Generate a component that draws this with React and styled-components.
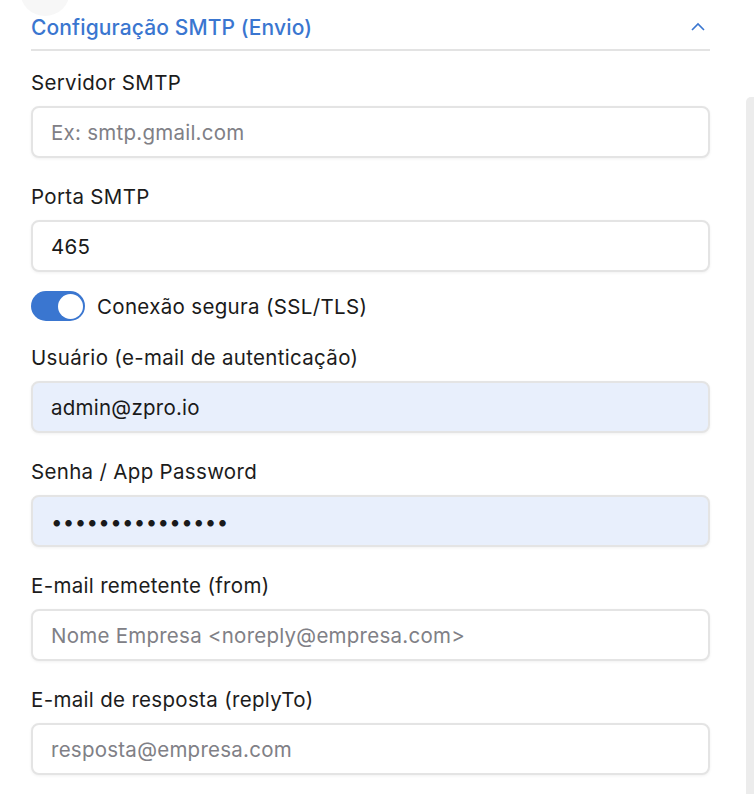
import React from "react";
import styled, { createGlobalStyle } from "styled-components";

const Global = createGlobalStyle`
  html, body { margin: 0; padding: 0; background: #ffffff; }
  body { font-family: Inter, "Noto Sans", sans-serif; color: #1a1a1a; overflow: hidden; }
`;

const Page = styled.div`
  position: relative;
  width: 754px;
  height: 794px;
  overflow: hidden;
  background: #fff;
`;

const Ghost = styled.div`
  position: absolute;
  left: 20px;
  top: -34px;
  width: 50px;
  height: 50px;
  border-radius: 50%;
  background: #f7f7f7;
`;

const Scrollbar = styled.div`
  position: absolute;
  right: 0;
  top: 97px;
  bottom: 0;
  width: 8px;
  background: #ececec;
  border-radius: 5px 0 0 0;
`;

const Section = styled.div`
  width: 679px;
  margin-left: 31px;
  display: flex;
  flex-direction: column;
`;

const Header = styled.div`
  display: flex;
  align-items: center;
  justify-content: space-between;
  padding-top: 5px;
  border-bottom: 2px solid #e3e3e3;
  box-sizing: border-box;
  height: 51px;
`;

const Title = styled.div`
  color: #3a76d0;
  font-size: 21px;
  font-weight: 500;
  letter-spacing: 0.12px;
`;

const Chevron = styled.svg`
  margin-right: 4px;
`;

const Field = styled.div`
  display: flex;
  flex-direction: column;
  margin-top: ${(p) => p.$top || 20}px;
`;

const Label = styled.label`
  font-size: 20.5px;
  font-weight: 400;
  color: #1c1c1c;
  line-height: 25px;
  height: 25px;
  margin-bottom: 11px;
  letter-spacing: 0.32px;
  white-space: nowrap;
`;

const Input = styled.div`
  height: 52px;
  box-sizing: border-box;
  border: 2px solid #e4e4e4;
  border-radius: 8px;
  background: ${(p) => (p.$filled ? "#e8effc" : "#ffffff")};
  box-shadow: 0 1px 3px rgba(0, 0, 0, 0.06);
  display: flex;
  align-items: center;
  padding: 0 18px;
  font-size: 20.5px;
  color: ${(p) => (p.$placeholder ? "#808086" : "#1a1a1a")};
  letter-spacing: ${(p) => (p.$dots ? "0.3px" : "0.25px")};
  white-space: nowrap;
`;

const ToggleRow = styled.div`
  display: flex;
  align-items: center;
  gap: 12px;
  margin-top: 19px;
  height: 30px;
`;

const Track = styled.div`
  position: relative;
  width: 54px;
  height: 30px;
  border-radius: 15px;
  background: #3a76d0;
  flex-shrink: 0;
`;

const Knob = styled.div`
  position: absolute;
  right: 2.5px;
  top: 2.5px;
  width: 25px;
  height: 25px;
  border-radius: 50%;
  background: #fff;
`;

const ToggleLabel = styled.span`
  font-size: 20.5px;
  color: #1a1a1a;
  letter-spacing: 0.33px;
  white-space: nowrap;
`;

const fields = [
  { label: "Usuário (e-mail de autenticação)", value: "admin@zpro.io", filled: true },
  { label: "Senha / App Password", value: "•••••••••••••••", filled: true, dots: true },
  { label: "E-mail remetente (from)", value: "Nome Empresa <noreply@empresa.com>", placeholder: true },
  { label: "E-mail de resposta (replyTo)", value: "resposta@empresa.com", placeholder: true },
];

export default function App() {
  return (
    <>
      <Global />
      <Page>
        <Ghost />
        <Scrollbar />
        <Section>
          <Header>
            <Title>Configuração SMTP (Envio)</Title>
            <Chevron width="16" height="10" viewBox="0 0 16 10">
              <path d="M2 8 L8 2 L14 8" fill="none" stroke="#3a76d0" strokeWidth="1.6" />
            </Chevron>
          </Header>
          <Field $top={19}>
            <Label>Servidor SMTP</Label>
            <Input $placeholder>Ex: smtp.gmail.com</Input>
          </Field>
          <Field $top={26}>
            <Label>Porta SMTP</Label>
            <Input>465</Input>
          </Field>
          <ToggleRow>
            <Track>
              <Knob />
            </Track>
            <ToggleLabel>Conexão segura (SSL/TLS)</ToggleLabel>
          </ToggleRow>
          {fields.map((f, i) => (
            <Field key={f.label} $top={i === 0 ? 24 : 26}>
              <Label>{f.label}</Label>
              <Input $filled={f.filled} $placeholder={f.placeholder} $dots={f.dots}>
                {f.value}
              </Input>
            </Field>
          ))}
        </Section>
      </Page>
    </>
  );
}
